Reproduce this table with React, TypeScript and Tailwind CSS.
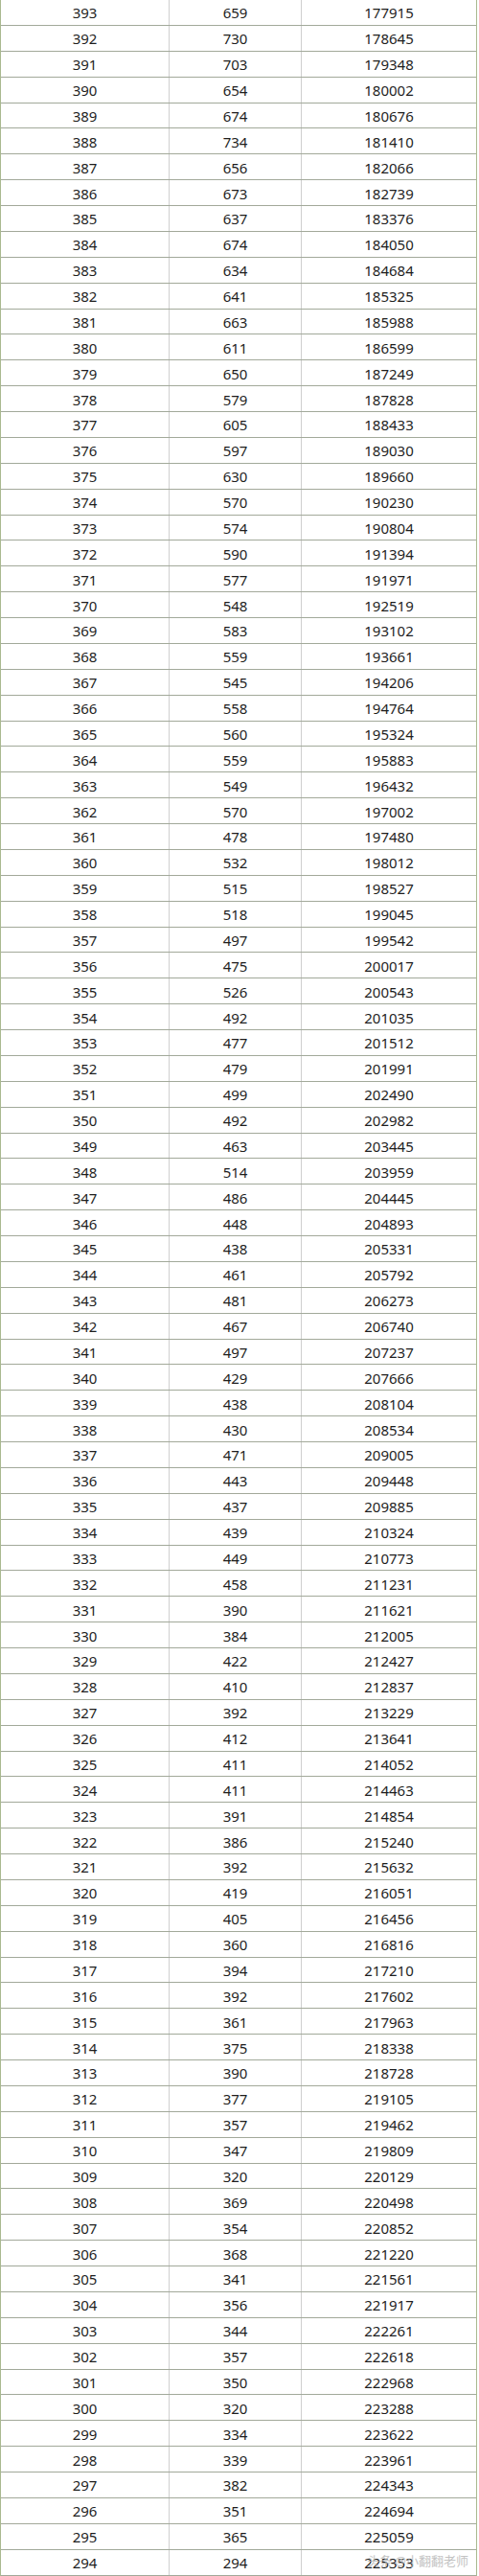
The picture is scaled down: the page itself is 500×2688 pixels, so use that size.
const rows = `393 659 177915
392 730 178645
391 703 179348
390 654 180002
389 674 180676
388 734 181410
387 656 182066
386 673 182739
385 637 183376
384 674 184050
383 634 184684
382 641 185325
381 663 185988
380 611 186599
379 650 187249
378 579 187828
377 605 188433
376 597 189030
375 630 189660
374 570 190230
373 574 190804
372 590 191394
371 577 191971
370 548 192519
369 583 193102
368 559 193661
367 545 194206
366 558 194764
365 560 195324
364 559 195883
363 549 196432
362 570 197002
361 478 197480
360 532 198012
359 515 198527
358 518 199045
357 497 199542
356 475 200017
355 526 200543
354 492 201035
353 477 201512
352 479 201991
351 499 202490
350 492 202982
349 463 203445
348 514 203959
347 486 204445
346 448 204893
345 438 205331
344 461 205792
343 481 206273
342 467 206740
341 497 207237
340 429 207666
339 438 208104
338 430 208534
337 471 209005
336 443 209448
335 437 209885
334 439 210324
333 449 210773
332 458 211231
331 390 211621
330 384 212005
329 422 212427
328 410 212837
327 392 213229
326 412 213641
325 411 214052
324 411 214463
323 391 214854
322 386 215240
321 392 215632
320 419 216051
319 405 216456
318 360 216816
317 394 217210
316 392 217602
315 361 217963
314 375 218338
313 390 218728
312 377 219105
311 357 219462
310 347 219809
309 320 220129
308 369 220498
307 354 220852
306 368 221220
305 341 221561
304 356 221917
303 344 222261
302 357 222618
301 350 222968
300 320 223288
299 334 223622
298 339 223961
297 382 224343
296 351 224694
295 365 225059
294 294 225353`
  .split('\n')
  .map((line) => line.split(' '))

export default function App() {
  return (
    <main className="w-[500px] bg-white" style={{ fontFamily: '"Noto Sans", "Noto Sans CJK SC", sans-serif' }}>
      <div className="relative w-[498px] border-l border-r border-[#a9b98f]">
        {rows.map(([score, count, total], i) => (
          <div
            key={score}
            className="grid h-[26.88px] grid-cols-[176px_138px_1fr] border-b border-[#a2a99a] text-[15px] leading-none text-[#1e1e1e]"
          >
            <div className="flex items-center justify-center border-r border-[#cfcfcf] pt-[2px]">{score}</div>
            <div className="flex items-center justify-center border-r border-[#cfcfcf] pt-[2px]">{count}</div>
            <div className="flex items-center justify-center pt-[2px]">{total}</div>
          </div>
        ))}

        {/* watermark */}
        <div className="absolute bottom-[5px] right-[8px] flex items-center gap-[3px] text-[13px] text-[#b4b4b4] opacity-80">
          <span>头条</span>
          <span>@小翻翻老师</span>
        </div>
      </div>
    </main>
  )
}
